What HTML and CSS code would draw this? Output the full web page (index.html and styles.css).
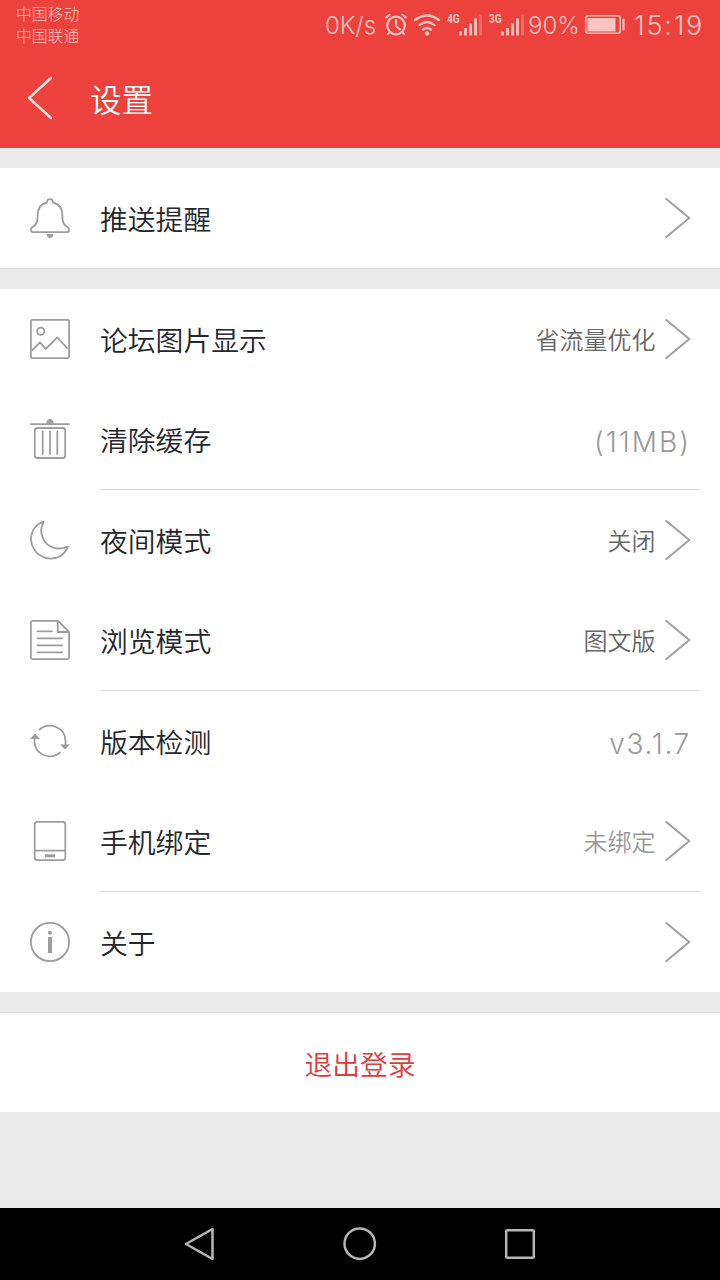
FILE: index.html
```html
<!DOCTYPE html>
<html lang="zh-CN">
<head>
<meta charset="utf-8">
<title>设置</title>
<link rel="stylesheet" href="styles.css">
</head>
<body>
<svg class="defs" width="0" height="0"><defs>
  <symbol id="chevron" viewBox="0 0 26 42"><path d="M1.3 2 24.3 21 1.3 40" /></symbol>
</defs></svg>
<div class="screen">
  <header class="top">
    <div class="status">
      <div class="carriers"><div>中国移动</div><div>中国联通</div></div>
      <div class="indicators">
        <span class="speed">0K/s</span>
        <svg class="alarm" width="24" height="24" viewBox="0 0 24 24"><circle cx="12" cy="12.5" r="8.8"/><path d="M12 7v6l4 3.500M2 4.500 5.500 1.800M18.500 1.800 22 4.500M5.500 19.500l-1.500 1.500M18.500 19.500l1.500 1.500"/></svg>
        <svg class="wifi" width="28" height="24" viewBox="0 0 28 24"><path d="M2 7Q14-2 26 7M6.500 12Q14 6 21.500 12M10 16.500Q14 13.500 18 16.500"/><circle cx="14" cy="20.500" r="2.200"/></svg>
        <div class="network"><span class="gen">4G</span><svg width="23" height="22" viewBox="0 0 23 22"><path d="M1.500 17.500v4M6.500 14v7.500M11.500 9.500v12M16.500 4.500v17"/><path class="dim" d="M21.500.5v21"/></svg></div>
        <div class="network second"><span class="gen">3G</span><svg width="23" height="22" viewBox="0 0 23 22"><path d="M1.500 17.500v4M6.500 14v7.500M11.500 9.500v12M16.500 4.500v17"/><path class="dim" d="M21.500.5v21"/></svg></div>
        <span class="percent">90%</span>
        <svg class="battery" width="41" height="20" viewBox="0 0 41 20"><rect class="shell" x=".75" y=".75" width="34.500" height="17.500" rx="2.500"/><rect class="fill" x="2.500" y="3" width="28" height="13.500"/><path d="M38.500 4.500v10"/></svg>
        <span class="clock">15:19</span>
      </div>
    </div>
    <div class="titlebar">
      <svg class="back" width="28" height="46" viewBox="0 0 28 46"><path d="M25 2 3 22 25 42"/></svg>
      <h1>设置</h1>
    </div>
  </header>

  <main>
    <section class="group first">
      <div class="row">
        <svg class="icon" viewBox="0 0 40 40"><path d="M17 4.500C17 0 23 0 23 4.500C30 6 32.300 10.500 32.300 17C32.300 25 34 27 37.500 29C40 31 39.500 34.200 36.500 34.200H3.500C.5 34.200 0 31 2.500 29C6 27 7.700 25 7.700 17C7.700 10.500 10 6 17 4.500Z"/><path class="solid" d="M16.500 36h7q-.5 4-3.500 4t-3.500-4Z"/></svg>
        <span class="label">推送提醒</span>
        <svg class="chevron"><use href="#chevron"/></svg>
      </div>
    </section>

    <section class="group">
      <div class="row">
        <svg class="icon" viewBox="0 0 40 40"><rect x=".9" y=".9" width="38.200" height="38.200" rx="1.500"/><circle cx="10.700" cy="12.200" r="3.600"/><path d="M2.500 31 10 23.300 15.700 30 27.300 18.300 37 29"/></svg>
        <span class="label">论坛图片显示</span><span class="value">省流量优化</span>
        <svg class="chevron"><use href="#chevron"/></svg>
      </div>
      <div class="row">
        <svg class="icon" viewBox="0 0 40 40"><path d="M1 5.200h38"/><path class="solid" d="M16.500 5V3.500Q17 0 20 0t3.500 3.500V5Z"/><rect x="4.800" y="9" width="30.400" height="30" rx="2.500"/><path d="M12.700 12.500v22.500M20 12.500v22.500M27.300 12.500v22.500"/></svg>
        <span class="label">清除缓存</span><span class="value plain size">(11MB)</span>
      </div>
      <hr>
      <div class="row">
        <svg class="icon" viewBox="0 0 40 40"><path d="M13.500 1.500C3 5.500-1.500 16 2.500 26C9 42.500 32 43 38 26.500C28 31 17 27.500 13 18.500C10.500 13 11 6.500 13.500 1.500Z"/></svg>
        <span class="label">夜间模式</span><span class="value">关闭</span>
        <svg class="chevron"><use href="#chevron"/></svg>
      </div>
      <div class="row">
        <svg class="icon" viewBox="0 0 40 40"><path d="M3 .9H28L39.100 12V37Q39.100 39.100 37 39.100H3Q.9 39.100.9 37V3Q.9.9 3 .9ZM27.700 1V12H39M7.500 11.300h14.500M7.500 18.300h24.500M7.500 25.300h24.500M7.500 32.300h24.500"/></svg>
        <span class="label">浏览模式</span><span class="value">图文版</span>
        <svg class="chevron"><use href="#chevron"/></svg>
      </div>
      <hr>
      <div class="row">
        <svg class="icon" viewBox="0 0 40 40"><path d="M9.500 8.500C19 .5 35.500 6 35.500 20V24M30 31.500C20.500 39.500 4.500 34 4.500 20V16"/><path class="solid" d="M30 23.500H40L35 28.500ZM0 18H10L5 12.500Z"/></svg>
        <span class="label">版本检测</span><span class="value plain">v3.1.7</span>
      </div>
      <div class="row">
        <svg class="icon" viewBox="0 0 40 40"><rect x="4.700" y=".9" width="30.600" height="38.200" rx="2.500"/><path d="M5 29.700H35"/><path class="key" d="M15 34.800H25"/></svg>
        <span class="label">手机绑定</span><span class="value pale">未绑定</span>
        <svg class="chevron"><use href="#chevron"/></svg>
      </div>
      <hr>
      <div class="row">
        <svg class="icon" viewBox="0 0 40 40"><circle cx="20" cy="20" r="19.100"/><circle class="solid" cx="20" cy="10.800" r="2"/><path class="stem" d="M20 15V31"/></svg>
        <span class="label">关于</span>
        <svg class="chevron"><use href="#chevron"/></svg>
      </div>
    </section>
    <button class="logout">退出登录</button>
  </main>

  <nav class="navbar">
    <svg width="34" height="34" viewBox="0 0 34 34"><path d="M3 17 29.500 2V32Z"/></svg>
    <svg width="34" height="34" viewBox="0 0 34 34"><circle cx="16.700" cy="16.700" r="15.200"/></svg>
    <svg width="34" height="34" viewBox="0 0 34 34"><rect x="3.200" y="3.200" width="27.600" height="27.600" rx="1"/></svg>
  </nav>
</div>
</body>
</html>
```
FILE: styles.css
```css
* { box-sizing: border-box; }
body { margin: 0; font-family: "Noto Sans CJK SC", sans-serif; font-weight: 350; }
.defs { position: absolute; }
svg { display: block; flex: none; fill: none; stroke-linecap: round; stroke-linejoin: round; }

.screen { width: 720px; height: 1280px; display: flex; flex-direction: column; background: #ebebeb; overflow: hidden; }

.top { height: 148px; background: #ec413d; color: #fff; }
.status { height: 50px; display: flex; justify-content: space-between; padding: 0 16px; color: #ffc3c0; }
.carriers { padding-top: 3px; font-size: 15.800px; line-height: 21.500px; font-weight: 300; }
.indicators { display: flex; align-items: center; height: 50px; font-family: Inter, sans-serif; font-size: 24px; font-weight: 300; white-space: nowrap; }
.indicators svg { stroke: #ffc3c0; stroke-width: 2.200; }
.speed { width: 59px; }
.wifi { margin-left: 5px; }
.wifi circle, .battery .fill { fill: #ffc3c0; stroke: none; }
.network { display: flex; align-items: flex-end; height: 24px; margin-left: 6px; }
.network.second { margin-left: 7px; }
.network svg { stroke-linecap: butt; stroke-width: 2.800; margin-bottom: 1px; }
.network .dim { opacity: .35; }
.gen { align-self: flex-start; width: 12px; font: bold 12px/12px "Roboto", sans-serif; transform: scaleX(.85); transform-origin: left; }
.percent { width: 52px; margin-left: 4px; }
.battery { margin-left: 5px; }
.indicators .battery .shell { stroke-width: 1.500; }
.clock { width: 70px; margin-left: 8px; font-size: 27px; letter-spacing: 1.800px; }

.titlebar { height: 98px; display: flex; align-items: center; padding: 0 26px; }
.back { stroke: #ffe1de; stroke-width: 2.400; }
.titlebar h1 { margin: -2px 0 0 36px; font-size: 31.500px; font-weight: 350; line-height: 48px; }

main { flex: 1; padding-top: 20px; }
.group { margin-bottom: 20px; background: #fff; }
.group.first { border-bottom: 1px solid #d9d9d9; }
.row { height: 100px; display: flex; align-items: center; padding: 0 29px 0 30px; color: #24262c; }
.icon { width: 40px; height: 40px; stroke: #9d9d9d; stroke-width: 1.800; overflow: visible; }
.icon .solid { fill: #9d9d9d; stroke: none; }
.icon .key { stroke-width: 3; stroke-linecap: butt; }
.icon .stem { stroke-width: 4; stroke-linecap: butt; }
.label { flex: 1; margin: 0 0 0 30px; font-size: 27.800px; line-height: 40px; }
.value { margin: 0 9.500px 0 0; font-size: 24px; line-height: 36px; color: #666; }
.value.pale, .value.plain { color: #999; }
.value.plain { margin: 5px 0 0 0; font-family: Inter, sans-serif; font-size: 28px; font-weight: 300; letter-spacing: 1.700px; }
.value.size { letter-spacing: 2px; }
.chevron { width: 26px; height: 42px; stroke: #a0a0a0; stroke-width: 2; }
hr { height: 1px; margin: 0 20px 0 100px; border: 0; background: #d9d9d9; }
.logout { display: block; width: 100%; height: 100px; padding: 0; border: 0; border-top: 1px solid #d9d9d9; background: #fff; color: #e23b3c; font: inherit; font-size: 27.800px; }

.navbar { height: 72px; display: flex; justify-content: space-between; align-items: center; padding: 0 183px; background: #000; }
.navbar svg { stroke: #b5b5b5; stroke-width: 2.500; }
```
